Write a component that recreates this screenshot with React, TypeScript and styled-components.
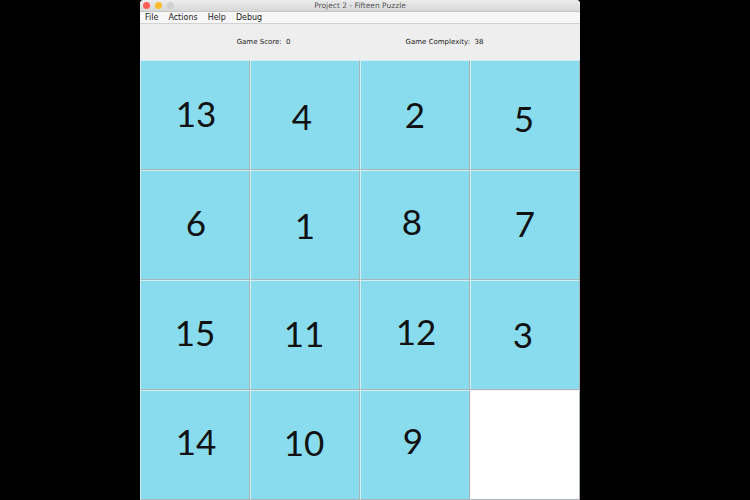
import styled, { createGlobalStyle } from "styled-components";

const GlobalStyle = createGlobalStyle`
  html, body {
    margin: 0;
    padding: 0;
    background: #000;
  }
`;

const tiles: { value: number | null; dx: number; dy: number }[] = [
  { value: 13, dx: 1, dy: -2 },
  { value: 4, dx: -3, dy: 1 },
  { value: 2, dx: 0, dy: -1 },
  { value: 5, dx: -1, dy: 3 },
  { value: 6, dx: 1, dy: -3 },
  { value: 1, dx: 0, dy: 0 },
  { value: 8, dx: -3, dy: -4 },
  { value: 7, dx: 0, dy: -2 },
  { value: 15, dx: 0, dy: -3 },
  { value: 11, dx: -1, dy: -2 },
  { value: 12, dx: 1, dy: -4 },
  { value: 3, dx: -2, dy: -1 },
  { value: 14, dx: 1, dy: -4 },
  { value: 10, dx: -1, dy: -3 },
  { value: 9, dx: -2, dy: -5 },
  { value: null, dx: 0, dy: 0 },
];

export default function App() {
  return (
    <>
      <GlobalStyle />
      <Screen>
        <Window>
          <TitleBar>
            <Lights>
              <Light $color="#fc5f57" />
              <Light $color="#fdbc2e" />
              <Light $color="#d0d0d0" />
            </Lights>
            <Title>Project 2 - Fifteen Puzzle</Title>
          </TitleBar>
          <MenuBar>
            <MenuItem>File</MenuItem>
            <MenuItem>Actions</MenuItem>
            <MenuItem>Help</MenuItem>
            <MenuItem>Debug</MenuItem>
          </MenuBar>
          <StatusPanel>
            <StatusLabel>Game Score:&nbsp; 0</StatusLabel>
            <StatusLabel>Game Complexity:&nbsp; 38</StatusLabel>
          </StatusPanel>
          <Board>
            {tiles.map((t, i) => (
              <Tile key={i} $empty={t.value === null}>
                {t.value !== null && (
                  <TileNumber style={{ transform: `translate(${t.dx}px, ${t.dy}px)` }}>
                    {t.value}
                  </TileNumber>
                )}
              </Tile>
            ))}
          </Board>
        </Window>
      </Screen>
    </>
  );
}

const Screen = styled.div`
  width: 750px;
  height: 500px;
  background: #000;
  display: flex;
  padding-left: 140px;
  box-sizing: border-box;
  overflow: hidden;
`;

const Window = styled.div`
  width: 440px;
  height: 500px;
  flex-shrink: 0;
  display: flex;
  flex-direction: column;
  background: #eeeeee;
  border-radius: 4px 4px 0 0;
  overflow: hidden;
`;

const TitleBar = styled.div`
  height: 11px;
  position: relative;
  display: flex;
  align-items: center;
  justify-content: center;
  background: linear-gradient(#ececec, #d8d8d8);
  border-bottom: 1px solid #c4c4c4;
`;

const Lights = styled.div`
  position: absolute;
  left: 3px;
  top: 2px;
  display: flex;
  gap: 5px;
`;

const Light = styled.div<{ $color: string }>`
  width: 7px;
  height: 7px;
  border-radius: 50%;
  background: ${(p) => p.$color};
`;

const Title = styled.div`
  font-family: "DejaVu Sans", sans-serif;
  font-size: 7.5px;
  color: #555;
`;

const MenuBar = styled.div`
  height: 11px;
  display: flex;
  align-items: center;
  gap: 10px;
  padding-left: 5px;
  background: #f7f7f7;
  border-bottom: 1px solid #d2d2d2;
`;

const MenuItem = styled.div`
  font-family: "DejaVu Sans", sans-serif;
  font-size: 8px;
  color: #222;
`;

const StatusPanel = styled.div`
  height: 36px;
  display: flex;
  align-items: center;
  justify-content: center;
  gap: 115px;
  background: #eeeeee;
`;

const StatusLabel = styled.div`
  font-family: "DejaVu Sans", sans-serif;
  font-size: 7px;
  color: #222;
`;

const Board = styled.div`
  flex: 1;
  display: grid;
  grid-template-columns: repeat(4, 110px);
  grid-template-rows: repeat(4, 110px);
`;

const Tile = styled.div<{ $empty: boolean }>`
  box-sizing: border-box;
  display: flex;
  align-items: center;
  justify-content: center;
  background: ${(p) => (p.$empty ? "#ffffff" : "#88dcee")};
  border-left: 1px solid ${(p) => (p.$empty ? "#f4f4f4" : "#d4eef4")};
  border-top: 1px solid ${(p) => (p.$empty ? "#f4f4f4" : "#d4eef4")};
  border-right: 1px solid #a9b4b9;
  border-bottom: 1px solid #a9b4b9;
`;

const TileNumber = styled.span`
  font-family: Lato, "Open Sans", sans-serif;
  font-size: 35px;
  color: #111;
  line-height: 1;
`;
